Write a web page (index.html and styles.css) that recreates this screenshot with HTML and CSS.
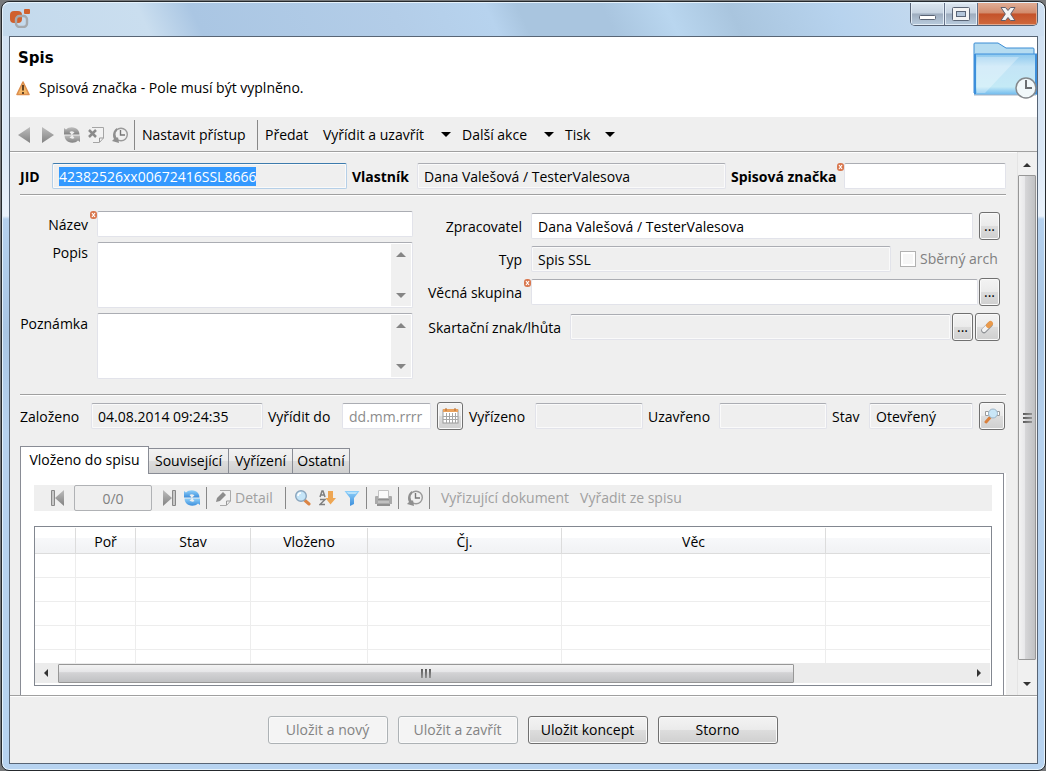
FILE: index.html
```html
<!DOCTYPE html>
<html lang="cs">
<head>
    <meta charset="UTF-8">
    <title>Spis</title>
    <link rel="stylesheet" href="styles.css">
</head>

<body>
<!-- Shared icons -->
<svg class="sprite" width="0" height="0">
    <defs>
        <linearGradient id="gray" x1="0" y1="0" x2="0" y2="1">
            <stop offset="0" stop-color="#bdbdbd"/><stop offset="1" stop-color="#828282"/>
        </linearGradient>
        <linearGradient id="blue" x1="0" y1="0" x2="0" y2="1">
            <stop offset="0" stop-color="#8fd0fa"/><stop offset="1" stop-color="#3d8fdc"/>
        </linearGradient>
        <linearGradient id="folder" x1="0" y1="0" x2="0" y2="1">
            <stop offset="0" stop-color="#8cc8ee"/><stop offset="0.3" stop-color="#c3e4f6"/>
            <stop offset="0.8" stop-color="#c4eaf6"/><stop offset="1" stop-color="#6db9ee"/>
        </linearGradient>
    </defs>
    <symbol id="refresh" viewBox="0 0 16 16">
        <path d="M0 1l2 1.500C5-.5 11-.5 14 3q1.500 2 1.500 4.500H8l2.500-2Q8 3.500 5.500 5L7.500 7.500H0z"/>
        <path d="M16 15l-2-1.500c-3 3-9 3-12-.5Q.5 11 .5 8.500H8l-2.500 2Q8 12.500 10.500 11L8.500 8.500H16z"/>
    </symbol>
    <symbol id="history" viewBox="0 0 16 16">
        <circle cx="9" cy="7.500" r="6.300" fill="#f0f0f0" stroke="#9a9a9a" stroke-width="1.400"/>
        <path d="M8.500 3v5H13" fill="none" stroke="#777" stroke-width="1.400"/>
        <path d="M5 1C1 3 0 9 2 12l-2 2 7 2-1-6-1 1C2.500 8 3 5 5 4z" fill="#8f8f8f"/>
    </symbol>
    <symbol id="error" viewBox="0 0 7 8">
        <rect width="7" height="8" rx="3" fill="#d9784f"/>
        <path d="M2 2l3 4M5 2L2 6" stroke="#fff" stroke-width="1.200"/>
    </symbol>
    <symbol id="up" viewBox="0 0 10 6"><path d="M0 6l5-5 5 5z"/></symbol>
    <symbol id="down" viewBox="0 0 10 6"><path d="M0 0l5 5 5-5z"/></symbol>
</svg>

<div class="window">
    <!-- Title bar -->
    <header class="titlebar">
        <svg class="app-icon" width="20" height="19" viewBox="0 0 20 19">
            <rect x="0" y="2" width="12" height="12" rx="4" fill="#d0602d"/>
            <rect x="14" y="0" width="6" height="5" rx="1" fill="#d0602d"/>
            <rect x="6" y="7" width="11" height="11" rx="3.500" fill="none" stroke="#a5a9ad" stroke-width="2.400"/>
        </svg>
        <div class="window-buttons">
            <button class="win-btn win-min" aria-label="Minimalizovat">
                <svg width="17" height="14"><rect x="0.500" y="8.500" width="16" height="4" rx="1" fill="#fff" stroke="#5a6475"/></svg>
            </button>
            <button class="win-btn win-max" aria-label="Maximalizovat">
                <svg width="18" height="14"><rect x="0.500" y="0.500" width="17" height="13" rx="1" fill="#f4f4f4" stroke="#5a6475"/><rect x="4.500" y="4.500" width="9" height="5" fill="#b4c6da" stroke="#5a6475"/></svg>
            </button>
            <button class="win-btn win-close" aria-label="Zavřít">
                <svg width="16" height="14" viewBox="0 0 16 14"><path d="M1 .5h4.500L8 3.500l2.500-3H15L10.700 7l4.300 6.500h-4.500L8 10.500l-2.500 3H1L5.300 7z" fill="#f3f3f3" stroke="#5f5f6c"/></svg>
            </button>
        </div>
    </header>

    <div class="client">
        <!-- Heading -->
        <section class="heading">
            <div>
                <h1>Spis</h1>
                <p class="message">
                    <svg width="14" height="15" viewBox="0 0 14 15"><path d="M7 1l6 12.500H1z" fill="#f5b868" stroke="#dd8f4e" stroke-width="1.600" stroke-linejoin="round"/><path d="M7 4v5.500M7 11v2" stroke="#55381d" stroke-width="1.800"/></svg>
                    Spisová značka - Pole musí být vyplněno.
                </p>
            </div>
            <svg class="folder" width="64" height="58" viewBox="0 0 64 58">
                <path d="M1 51V2q0-1 1-1h23l8 5h27q1 0 1 1v6" fill="#b5dcf1" stroke="#3b8cd4"/>
                <path d="M1 12h63v41H1z" fill="url(#folder)"/>
                <path d="M4 15h42L12 51H4z" fill="#fff" opacity="0.300"/>
                <path d="M2 52V12M63 52V12" stroke="#3d8fdb" stroke-width="2"/>
                <path d="M2 12h62" stroke="#3d8fdb"/>
                <path d="M1 53h62" stroke="#a7b3c4"/>
                <circle cx="53" cy="46" r="10" fill="#f1f8fa" stroke="#84888c" stroke-width="1.500"/>
                <path d="M53 38v8h6" fill="none" stroke="#6b6e71" stroke-width="2"/>
            </svg>
        </section>

        <!-- Main toolbar -->
        <nav class="toolbar">
            <button class="tool icon" aria-label="Předchozí"><svg width="14" height="16"><path d="M13 0v16L1 8z" fill="url(#gray)"/></svg></button>
            <button class="tool icon" aria-label="Další"><svg width="14" height="16"><path d="M1 0v16l12-8z" fill="url(#gray)"/></svg></button>
            <button class="tool icon" aria-label="Obnovit"><svg width="16" height="16" fill="url(#gray)"><use href="#refresh"/></svg></button>
            <button class="tool icon" aria-label="Smazat">
                <svg width="16" height="16"><path d="M4 .5h11.500V11l-4 4.500H5" fill="#f2f2f2" stroke="#a5a5a5"/><path d="M11.500 15v-4h4" fill="none" stroke="#999"/><path d="M1 3l7 7M8 3l-7 7" stroke="#8b8b8b" stroke-width="2.500"/></svg>
            </button>
            <button class="tool icon" aria-label="Historie"><svg width="16" height="16"><use href="#history"/></svg></button>
            <span class="divider"></span>
            <button class="tool wide">Nastavit přístup</button>
            <span class="divider"></span>
            <button class="tool send">Předat</button>
            <button class="tool menu close-menu">Vyřídit a uzavřít <svg width="10" height="6"><use href="#down"/></svg></button>
            <button class="tool menu next-menu">Další akce <svg width="10" height="6"><use href="#down"/></svg></button>
            <button class="tool menu print-menu">Tisk <svg width="10" height="6"><use href="#down"/></svg></button>
        </nav>

        <div class="scroll-area">
            <main class="content">
                <!-- Identification -->
                <div class="row row-id">
                    <label for="jid"><b>JID</b></label>
                    <input id="jid" class="field focused" type="text" value="42382526xx00672416SSL8666" readonly>
                    <label for="owner" class="next"><b>Vlastník</b></label>
                    <input id="owner" class="field readonly" type="text" value="Dana Valešová / TesterValesova" readonly>
                    <label for="mark" class="next"><b>Spisová značka</b></label>
                    <div class="required"><svg class="badge" width="7" height="8"><use href="#error"/></svg><input id="mark" class="field" type="text"></div>
                </div>

                <!-- Details -->
                <div class="details">
                    <div class="left">
                        <label for="name">Název</label>
                        <div class="required"><svg class="badge" width="7" height="8"><use href="#error"/></svg><input id="name" class="field" type="text"></div>
                        <label for="desc">Popis</label>
                        <div class="field area">
                            <textarea id="desc"></textarea>
                            <div class="area-scroll"><svg width="10" height="6"><use href="#up"/></svg><svg width="10" height="6"><use href="#down"/></svg></div>
                        </div>
                        <label for="note">Poznámka</label>
                        <div class="field area">
                            <textarea id="note"></textarea>
                            <div class="area-scroll"><svg width="10" height="6"><use href="#up"/></svg><svg width="10" height="6"><use href="#down"/></svg></div>
                        </div>
                    </div>
                    <div class="right">
                        <div class="line">
                            <label for="handler">Zpracovatel</label>
                            <input id="handler" class="field" type="text" value="Dana Valešová / TesterValesova">
                            <button class="btn pick spaced">...</button>
                        </div>
                        <div class="line">
                            <label for="type">Typ</label>
                            <input id="type" class="field readonly" type="text" value="Spis SSL" readonly>
                            <span class="check"><input id="arch" type="checkbox" disabled><label for="arch">Sběrný arch</label></span>
                        </div>
                        <div class="line">
                            <label for="group">Věcná skupina</label>
                            <div class="required"><svg class="badge" width="7" height="8"><use href="#error"/></svg><input id="group" class="field" type="text"></div>
                            <button class="btn pick">...</button>
                        </div>
                        <div class="line long">
                            <label for="shred">Skartační znak/lhůta</label>
                            <input id="shred" class="field readonly" type="text" readonly>
                            <button class="btn pick">...</button>
                            <button class="btn pick clear" aria-label="Vymazat">
                                <svg width="13" height="14" viewBox="0 0 13 14"><path d="M3 10.500l6-6" stroke="#8f9296" stroke-width="5.500" stroke-linecap="round"/><path d="M3 10l3-3" stroke="#f3f3f3" stroke-width="4" stroke-linecap="round"/><path d="M7.500 5.500l2-2" stroke="#e99a4c" stroke-width="5" stroke-linecap="round"/></svg>
                            </button>
                        </div>
                    </div>
                </div>

                <!-- Dates and state -->
                <div class="row row-dates">
                    <label for="created">Založeno</label>
                    <input id="created" class="field readonly" type="text" value="04.08.2014 09:24:35" readonly>
                    <label for="due" class="next">Vyřídit do</label>
                    <input id="due" class="field" type="text" placeholder="dd.mm.rrrr">
                    <button class="btn square" aria-label="Kalendář">
                        <svg width="17" height="16"><rect x="1" y="2" width="15" height="13" fill="#fff" stroke="#999"/><path d="M1 1h15v3H1z" fill="#eaa25e"/><path d="M4 0v3M13 0v3" stroke="#b06a33"/><path d="M4.500 5v10M7.500 5v10M10.500 5v10M13.500 5v10M1 8.500h15M1 11.500h15" stroke="#a6a6a6"/></svg>
                    </button>
                    <label for="done">Vyřízeno</label>
                    <input id="done" class="field readonly" type="text" readonly>
                    <label for="closed" class="next">Uzavřeno</label>
                    <input id="closed" class="field readonly" type="text" readonly>
                    <label for="state" class="next">Stav</label>
                    <input id="state" class="field readonly" type="text" value="Otevřený" readonly>
                    <button class="btn square" aria-label="Zobrazit stav">
                        <svg width="17" height="16"><path d="M1.500 3.500h3v4h-3zM12.500 3.500h3v4h-3z" fill="#fff" stroke="#9a9a9a"/><path d="M2 14l4-4.500" stroke="#d9803d" stroke-width="3" stroke-linecap="round"/><circle cx="9" cy="5.500" r="4.500" fill="#c9e6f7" stroke="#9db4c6"/></svg>
                    </button>
                </div>

                <!-- Tabs -->
                <div class="tabs" role="tablist">
                    <button class="tab active" role="tab" aria-selected="true">Vloženo do spisu</button>
                    <button class="tab tab-related" role="tab">Související</button>
                    <button class="tab tab-done" role="tab">Vyřízení</button>
                    <button class="tab tab-other" role="tab">Ostatní</button>
                </div>
                <section class="panel">
                    <div class="list-tools">
                        <button class="tool" aria-label="První"><svg width="14" height="16"><path d="M.5.5h3v15h-3z" fill="#c8c8c8" stroke="#888"/><path d="M13 0v16L4 8z" fill="url(#gray)"/></svg></button>
                        <input class="pager" type="text" value="0/0" aria-label="Záznam" disabled>
                        <button class="tool" aria-label="Poslední"><svg width="14" height="16"><path d="M10.500.5h3v15h-3z" fill="#c8c8c8" stroke="#888"/><path d="M1 0v16l9-8z" fill="url(#gray)"/></svg></button>
                        <button class="tool" aria-label="Obnovit"><svg width="16" height="16" fill="url(#blue)"><use href="#refresh"/></svg></button>
                        <span class="divider"></span>
                        <button class="tool detail" disabled>
                            <svg width="16" height="16"><path d="M5 .5h10.500V11l-4 4.500H5" fill="#f2f2f2" stroke="#aaa"/><path d="M11.500 15v-4h4" fill="none" stroke="#999"/><path d="M1 12l1-4 6-6 3 3-6 6z" fill="#8d8d8d"/></svg>
                            Detail
                        </button>
                        <span class="divider"></span>
                        <button class="tool" aria-label="Hledat"><svg width="17" height="16"><path d="M11 10.500l4 3.500" stroke="#db8444" stroke-width="3" stroke-linecap="round"/><circle cx="7" cy="6" r="5.300" fill="#c5e5f8" stroke="#8aa5bd" stroke-width="1.400"/><path d="M4 6q0-3 3-3" fill="none" stroke="#fff" stroke-width="1.500"/></svg></button>
                        <button class="tool" aria-label="Seřadit"><svg width="17" height="16"><path d="M1 7l2-6h1l2 6M2 5h3M1 9.500h5L1 14.500h5" fill="none" stroke="#808080" stroke-width="1.500"/><path d="M9 1h5v7h3l-5.500 6.500L6.500 8H9z" fill="#eea653"/></svg></button>
                        <button class="tool" aria-label="Filtr"><svg width="16" height="16"><path d="M.5 1h15L10 8v6l-4 2V8z" fill="url(#blue)"/><path d="M2.500 2h11l-2 2h-7z" fill="#b8e2fb"/></svg></button>
                        <span class="divider"></span>
                        <button class="tool" aria-label="Tisk"><svg width="17" height="16"><path d="M3.500 8V.5h10V8" fill="#fafafa" stroke="#c2c2c2"/><path d="M0 7q0-1 1-1h2v3h11V6h2q1 0 1 1v7H0z" fill="#aaa"/><path d="M3 9h11" stroke="#777"/><path d="M2 14h13v2H2z" fill="#909090"/><path d="M3 12h11" stroke="#d8d8d8"/></svg></button>
                        <span class="divider"></span>
                        <button class="tool" aria-label="Historie"><svg width="16" height="16"><use href="#history"/></svg></button>
                        <span class="divider"></span>
                        <button class="tool text" disabled>Vyřizující dokument</button>
                        <button class="tool text" disabled>Vyřadit ze spisu</button>
                    </div>

                    <div class="grid-box">
                        <table>
                            <colgroup>
                                <col class="c-mark"><col class="c-order"><col class="c-state"><col class="c-in"><col class="c-num"><col class="c-subject"><col>
                            </colgroup>
                            <thead>
                                <tr><th></th><th>Poř</th><th>Stav</th><th>Vloženo</th><th>Čj.</th><th>Věc</th><th></th></tr>
                            </thead>
                            <tbody>
                                <tr><td></td><td></td><td></td><td></td><td></td><td></td><td></td></tr>
                                <tr><td></td><td></td><td></td><td></td><td></td><td></td><td></td></tr>
                                <tr><td></td><td></td><td></td><td></td><td></td><td></td><td></td></tr>
                                <tr><td></td><td></td><td></td><td></td><td></td><td></td><td></td></tr>
                                <tr class="cut"><td></td><td></td><td></td><td></td><td></td><td></td><td></td></tr>
                            </tbody>
                        </table>
                        <div class="hscroll">
                            <svg class="arrow" width="6" height="10"><path d="M5 1v8L1 5z"/></svg>
                            <div class="track"><div class="thumb"><i></i><i></i><i></i></div></div>
                            <svg class="arrow" width="6" height="10"><path d="M1 1v8l4-4z"/></svg>
                        </div>
                    </div>
                </section>
            </main>

            <div class="vscroll">
                <svg width="8" height="5"><use href="#up"/></svg>
                <div class="thumb"><i></i><i></i><i></i></div>
                <svg width="8" height="5"><use href="#down"/></svg>
            </div>
        </div>

        <!-- Dialog buttons -->
        <footer class="actions">
            <button class="btn" disabled>Uložit a nový</button>
            <button class="btn" disabled>Uložit a zavřít</button>
            <button class="btn">Uložit koncept</button>
            <button class="btn">Storno</button>
        </footer>
    </div>
</div>

<script>
document.getElementById('jid').select();
</script>
</body>
</html>
```
FILE: styles.css
```css
* {
    box-sizing: border-box;
}
body {
    margin: 0;
    background: #77797b;
    font-family: "Open Sans", "Noto Sans", sans-serif;
    font-size: 14px;
    line-height: 20px;
    color: #000;
}
button, input, textarea {
    font: inherit;
    color: inherit;
    margin: 0;
}
svg {
    display: block;
    flex: none;
}
.sprite {
    position: absolute;
}

/* Window frame */
.window {
    display: flex;
    flex-direction: column;
    min-height: calc(100vh - 1px);
    margin: 1px 0 0 1px;
    padding: 0 7px 6px;
    border: 1px solid #25292d;
    border-radius: 8px;
    background: linear-gradient(#cfe0f2 0, #dbe8f6 150px, #eaf2fb 214px, #b5d1ee 217px, #a9c6e4 330px, #b7d2ee 430px, #b7d3f0 100%);
    box-shadow: inset 0 0 0 1px #e6f2fb;
}
.titlebar {
    display: flex;
    justify-content: space-between;
    height: 34px;
    margin: 0 -6px;
    padding: 0 6px 0 7px;
    background: linear-gradient(65deg, #c3d9ec 0, #cadeef 14%, #aac6e3 19%, #b3cde8 38%, #b7d3ee 47%, #a9c5df 50%, #a9c5df 58%, #b9d6ef 64%, #a9c5de 70%, #b7d3ee 80%, #c9dcef 92%, #cfe0f2 100%);
    border-top: 1px solid #e6f2fb;
    border-radius: 7px 7px 0 0;
}
.app-icon {
    margin-top: 6px;
}
.window-buttons {
    display: flex;
    height: 23px;
    border: 1px solid #566173;
    border-top: 0;
    border-radius: 0 0 5px 5px;
    overflow: hidden;
}
.win-btn {
    display: flex;
    align-items: center;
    justify-content: center;
    width: 33px;
    padding: 0;
    border: 0;
    border-right: 1px solid #66738a;
    background: linear-gradient(#dbe5ef 0, #c6d3e1 45%, #9eadbf 50%, #b9cbdd 100%);
    box-shadow: inset 0 0 0 1px #e3edf6;
}
.win-min {
    width: 34px;
}
.win-close {
    width: 59px;
    border-right: 0;
    background: linear-gradient(#dfae97 0, #d28b6c 45%, #c4522a 50%, #d0693c 100%);
    box-shadow: inset 0 0 0 1px #e2a88d;
}
.client {
    display: flex;
    flex: 1;
    flex-direction: column;
    border: 1px solid #586575;
    background: #efefef;
}

/* Heading */
.heading {
    display: flex;
    justify-content: space-between;
    height: 80px;
    padding: 5px 0 0 6px;
    background: #fff;
}
.heading h1 {
    margin: 6px 0 10px 2px;
    font-family: "DejaVu Sans", Verdana, sans-serif;
    font-size: 15px;
    line-height: 20px;
}
.message {
    display: flex;
    align-items: center;
    gap: 9px;
    margin: 0;
}

/* Toolbars */
.toolbar {
    display: flex;
    align-items: center;
    height: 35px;
    padding: 1px 7px 0;
    border-bottom: 1px solid #a0a0a0;
    box-shadow: 0 1px 0 #fff;
}
.tool {
    display: flex;
    align-items: center;
    flex: none;
    padding: 0;
    border: 0;
    background: none;
    white-space: nowrap;
}
.tool:disabled {
    color: #a0a0a0;
}
.tool.icon {
    justify-content: center;
    width: 24px;
    margin: 0 5px 0 -5px;
}
.divider {
    flex: none;
    width: 1px;
    height: 30px;
    background: #888;
}
.toolbar .divider {
    margin-left: -3px;
}
.tool.wide {
    width: 125px;
    padding-left: 7px;
}
.tool.send {
    width: 65px;
    padding-left: 7px;
}
.tool.menu {
    justify-content: space-between;
    margin-right: 11px;
}
.close-menu {
    width: 128px;
}
.next-menu {
    width: 92px;
}
.print-menu {
    width: 50px;
}

/* Form */
.scroll-area {
    display: flex;
    flex: 1;
}
.content {
    display: flex;
    flex: 1;
    flex-direction: column;
    min-width: 0;
    padding: 11px 11px 0 10px;
}
.field {
    width: 100%;
    min-width: 0;
    height: 26px;
    padding: 0 6px;
    border: 1px solid #e2e3ea;
    border-top-color: #abadb3;
    border-radius: 2px;
    background: #fff;
}
.field.readonly {
    background: #efefef;
    box-shadow: inset 0 0 0 1px #fafafa;
}
.field.focused {
    border-color: #b5cfe7;
    border-top-color: #3d7bad;
    background: #efefef;
    box-shadow: inset 0 0 0 1px #fafafa;
    outline: none;
}
.field::selection {
    background: #3399ff;
    color: #fff;
}
.field::placeholder {
    color: #8c8c8c;
}
label {
    white-space: nowrap;
}
.required {
    position: relative;
    flex: 1;
}
.required .field {
    display: block;
}
.badge {
    position: absolute;
    top: 0;
    left: -7px;
}
.row {
    display: grid;
    align-items: center;
}
.row label {
    padding-top: 2px;
}
.row .next {
    padding-left: 5px;
}
.row-id {
    grid-template-columns: 32px 295fr 70px 309fr 118px 162fr;
    padding-bottom: 5px;
    border-bottom: 1px solid #a0a0a0;
    box-shadow: 0 1px 0 #fff;
}
.details {
    display: flex;
    gap: 15px;
    padding: 16px 0 15px;
    border-bottom: 1px solid #a0a0a0;
    box-shadow: 0 1px 0 #fff;
}
.left {
    display: grid;
    flex: 393;
    grid-template-columns: 68px 1fr;
    gap: 5px 9px;
}
.left label {
    padding-top: 1px;
    text-align: right;
}
.left label:first-child {
    padding-top: 4px;
}
.area {
    display: flex;
    height: 66px;
    padding: 1px;
}
.area textarea {
    flex: 1;
    min-width: 0;
    padding: 2px 5px;
    border: 0;
    resize: none;
    outline: none;
}
.area-scroll {
    display: flex;
    flex-direction: column;
    align-items: center;
    justify-content: space-between;
    width: 20px;
    padding: 7px 0;
    background: #f0f0f0;
    fill: #858585;
}
.right {
    display: flex;
    flex: 578;
    flex-direction: column;
    gap: 5px;
    padding-top: 1px;
}
.line {
    display: flex;
    align-items: center;
    height: 28px;
    margin-right: 6px;
}
.line > label {
    flex: none;
    width: 94px;
    margin-right: 9px;
    padding-top: 1px;
    text-align: right;
}
.line.long {
    margin-top: 2px;
}
.line.long > label {
    width: 133px;
}
.line .field {
    flex: 1;
}
.check {
    display: flex;
    align-items: center;
    gap: 4px;
    width: 109px;
    padding-left: 9px;
    color: #808080;
}
.check input {
    appearance: none;
    flex: none;
    width: 16px;
    height: 16px;
    border: 1px solid #b1b1b1;
    background: #f6f6f6;
    box-shadow: inset 0 0 0 2px #fff;
}
.btn {
    display: flex;
    align-items: center;
    justify-content: center;
    flex: none;
    height: 28px;
    padding: 0;
    border: 1px solid #707070;
    border-radius: 3px;
    background: linear-gradient(#f3f3f3 0, #ebebeb 48%, #dddddd 50%, #cfcfcf 100%);
    box-shadow: inset 0 0 0 1px #fafafa;
}
.btn:disabled {
    border-color: #adb2b5;
    background: #f4f4f4;
    color: #838383;
}
.pick {
    width: 21px;
    margin-left: 1px;
}
.pick.spaced {
    margin-left: 6px;
}
.pick.clear {
    width: 25px;
    margin-left: 2px;
}
.square {
    width: 26px;
    margin-left: 6px;
}
.row-dates {
    grid-template-columns: 71px 172fr 79px 89fr 38px 66px 108fr 76px 108fr 42px 104fr 33px;
    padding: 7px 0 16px;
}

/* Tabs */
.tabs {
    position: relative;
    display: flex;
    align-items: flex-end;
    height: 28px;
    margin-bottom: -1px;
}
.tab {
    height: 26px;
    padding: 0;
    margin-left: -1px;
    border: 1px solid #898c95;
    background: linear-gradient(#f2f2f2 0, #ebebeb 48%, #dddddd 50%, #cfcfcf 100%);
    white-space: nowrap;
}
.tab.active {
    width: 129px;
    height: 28px;
    margin: 0;
    padding-bottom: 1px;
    border-bottom: 0;
    background: #fff;
}
.tab-related {
    width: 81px;
}
.tab-done {
    width: 65px;
}
.tab-other {
    width: 58px;
}
.panel {
    flex: 1;
    margin-right: 2px;
    padding: 11px 11px 9px 13px;
    border: 1px solid #898c95;
    border-bottom: 0;
    background: #fff;
    box-shadow: 2px 0 0 #fff;
}
.list-tools {
    display: flex;
    align-items: center;
    gap: 8px;
    height: 26px;
    padding-left: 17px;
    background: #efefef;
}
.list-tools .divider {
    height: 22px;
    margin-left: -2px;
}
.pager {
    width: 78px;
    height: 26px;
    margin: 0 2px 0 1px;
    padding: 0;
    border: 1px solid #b0b2b5;
    border-radius: 2px;
    background: #efefef;
    color: #808080;
    text-align: center;
}
.detail {
    gap: 4px;
    width: 64px;
}
.list-tools .text {
    margin-left: 3px;
}

/* Document list */
.grid-box {
    margin-top: 15px;
    padding: 1px 1px 2px 0;
    border: 1px solid #828790;
}
table {
    width: 100%;
    table-layout: fixed;
    border-spacing: 0;
}
th, td {
    height: 24px;
    padding: 0;
    border-right: 1px solid #ededed;
    border-bottom: 1px solid #ededed;
}
th {
    height: 26px;
    padding-top: 2px;
    border-color: #dcdcdc;
    background: linear-gradient(#fff 0, #fff 40%, #f7f8fa 42%, #f1f2f4 100%);
    font-weight: normal;
}
th:last-child, td:last-child {
    border-right: 0;
}
.cut td {
    height: 13px;
    border-bottom: 0;
}
.c-mark { width: 41px; }
.c-order { width: 60px; }
.c-state { width: 115px; }
.c-in { width: 117px; }
.c-num { width: 194px; }
.c-subject { width: 264px; }

/* Scrollbars */
.hscroll {
    display: flex;
    align-items: center;
    gap: 9px;
    height: 20px;
    padding: 0 8px;
    background: #ececec;
    fill: #333;
}
.track {
    flex: 1;
}
.thumb {
    display: flex;
    align-items: center;
    justify-content: center;
    gap: 2px;
    border: 1px solid #979797;
    border-radius: 1px;
}
.thumb i {
    background: linear-gradient(135deg, #555, #999);
}
.hscroll .thumb {
    width: 81%;
    height: 19px;
    background: linear-gradient(#f3f3f3 0, #e6e6e8 40%, #d3d3d5 45%, #c0c1c3 100%);
}
.hscroll .thumb i {
    width: 2px;
    height: 9px;
}
.vscroll {
    display: flex;
    flex-direction: column;
    align-items: center;
    width: 20px;
    padding: 10px 1px 8px 0;
    border-left: 1px solid #e4e4e4;
    background: #f0f0f0;
    fill: #333;
}
.vscroll .thumb {
    flex: 1;
    flex-direction: column;
    width: 100%;
    margin: 8px 0 22px;
    background: linear-gradient(90deg, #f3f3f3 0, #e8e8ea 35%, #d6d6d8 40%, #c0c1c3 100%);
}
.vscroll .thumb i {
    width: 9px;
    height: 2px;
}

/* Dialog buttons */
.actions {
    display: flex;
    justify-content: center;
    gap: 10px;
    height: 68px;
    padding: 20px 2px 0 0;
    border-top: 1px solid #a0a0a0;
    box-shadow: inset 0 1px 0 #fff;
}
.actions .btn {
    width: 120px;
}
```
